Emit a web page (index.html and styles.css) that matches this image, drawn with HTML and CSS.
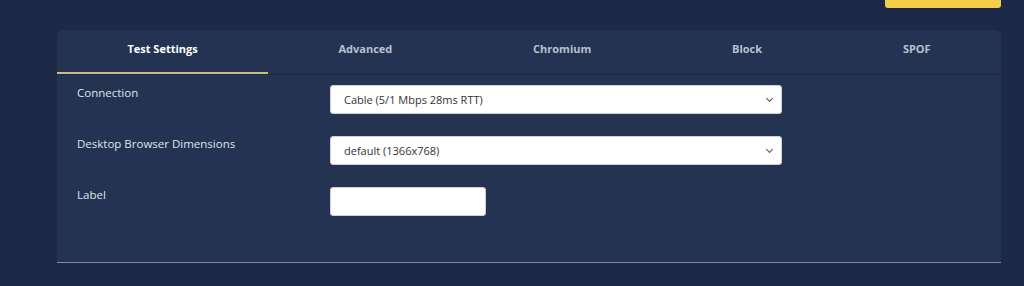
FILE: index.html
```html
<!DOCTYPE html>
<html>
<head>
  <title>Test Settings</title>
  <link rel="stylesheet" href="styles.css">
</head>
<body>
  <div class="top-bar">
    <button class="start-btn" type="button"></button>
  </div>
  <div class="settings-panel">
    <ul class="tabs">
      <li class="tab active">Test Settings</li>
      <li class="tab">Advanced</li>
      <li class="tab">Chromium</li>
      <li class="tab">Block</li>
      <li class="tab">SPOF</li>
    </ul>
    <div class="tab-body">
      <div class="form-row">
        <label for="connection">Connection</label>
        <div class="select-wrap">
          <select id="connection" class="wide">
            <option>Cable (5/1 Mbps 28ms RTT)</option>
          </select>
        </div>
      </div>
      <div class="form-row">
        <label for="dimensions">Desktop Browser Dimensions</label>
        <div class="select-wrap">
          <select id="dimensions" class="wide">
            <option>default (1366x768)</option>
          </select>
        </div>
      </div>
      <div class="form-row">
        <label for="label">Label</label>
        <input type="text" id="label" class="short">
      </div>
    </div>
  </div>
</body>
</html>
```

FILE: styles.css
```css
body {
  font-family: "Open Sans", Arial, sans-serif;
  background-color: #1c2a48;
  margin: 0;
  padding: 0 23px 0 57px;
  height: 286px;
  overflow: hidden;
}

.top-bar {
  display: flex;
  justify-content: flex-end;
  height: 30px;
}

.start-btn {
  width: 116px;
  height: 8px;
  border: none;
  background-color: #f5cf4b;
  border-radius: 0 0 3px 3px;
  padding: 0;
}

.settings-panel {
  background-color: #243352;
  border-radius: 6px 6px 0 0;
  border-bottom: 1px solid #7c8ba6;
}

.tabs {
  list-style: none;
  margin: 0;
  padding: 0;
  display: flex;
  border-bottom: 1px solid #1d2a46;
}

.tab {
  flex: auto;
  height: 42px;
  line-height: 38px;
  text-align: center;
  font-size: 11px;
  font-weight: bold;
  color: #b9c1ce;
  border-bottom: 2px solid transparent;
}

.tab.active {
  color: #fff;
  border-bottom-color: #cbbb7c;
}

.tab-body {
  padding: 10px 20px 46px;
}

.form-row {
  display: flex;
  align-items: flex-start;
  height: 29px;
  margin-bottom: 22px;
}

.form-row:last-child {
  margin-bottom: 0;
}

label {
  width: 253px;
  font-size: 11.5px;
  color: #dfe4ec;
  line-height: 16px;
}

.select-wrap {
  position: relative;
}

.select-wrap::after {
  content: "";
  position: absolute;
  right: 10px;
  top: 11px;
  width: 4px;
  height: 4px;
  border-right: 1.3px solid #555;
  border-bottom: 1.3px solid #555;
  transform: rotate(45deg);
  pointer-events: none;
}

select,
input[type="text"] {
  font-family: "Open Sans", Arial, sans-serif;
  font-size: 11px;
  color: #333;
  background-color: #fff;
  border: 1px solid #c9d1dd;
  border-radius: 3px;
  height: 29px;
  box-sizing: border-box;
  margin: 0;
}

select.wide {
  width: 452px;
  padding: 0 13px;
  appearance: none;
  -webkit-appearance: none;
}

input.short {
  width: 156px;
  padding: 0 13px;
}
```
